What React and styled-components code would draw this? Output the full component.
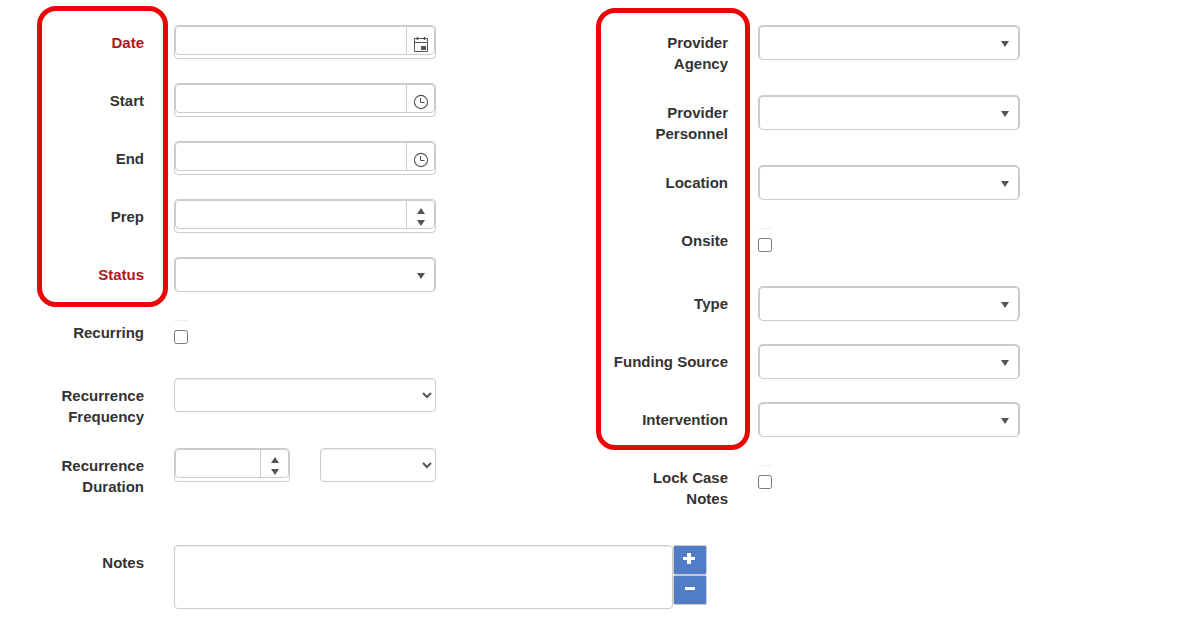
import React, { useState } from 'react';
import styled, { createGlobalStyle, css } from 'styled-components';

const CalendarIcon = () => (
  <svg width="16" height="16" viewBox="0 0 16 16" fill="none" stroke="#555" aria-hidden="true">
    <path d="M1.5 2.5h13v13h-13z M1 6.5h14" />
    <path d="M4.5 1v3 M11.5 1v3" />
    <path d="M3.5 2.5h2 M10.5 2.5h2" strokeWidth="2" />
    <rect x="8" y="10" width="5" height="4" fill="#555" stroke="none" />
  </svg>
);

const ClockIcon = () => (
  <svg width="16" height="16" viewBox="0 0 16 16" fill="none" stroke="#555" aria-hidden="true">
    <circle cx="8" cy="8" r="6.6" strokeWidth="1.1" />
    <path d="M7.5 4v4.5h4" />
  </svg>
);

const Triangle = ({ up }) => (
  <svg width="8" height="6" viewBox="0 0 8 6" fill="#555" aria-hidden="true">
    <path d={up ? 'M4 0L8 6H0z' : 'M0 0h8L4 6z'} />
  </svg>
);

const PickerField = ({ id, label, required, action, icon }) => (
  <Row>
    <Label htmlFor={id} $required={required}>{label}</Label>
    <Control>
      <Picker>
        <PickerInner>
          <PickerInput id={id} type="text" />
          <PickerButton type="button" aria-label={action}>{icon}</PickerButton>
        </PickerInner>
      </Picker>
    </Control>
  </Row>
);

const NumberBox = ({ id }) => {
  const [value, setValue] = useState('');
  const step = (n) => setValue(String((Number(value) || 0) + n));
  return (
    <Picker>
      <PickerInner>
        <PickerInput
          id={id}
          type="text"
          inputMode="numeric"
          value={value}
          onChange={(e) => setValue(e.target.value)}
        />
        <Spinner>
          <SpinButton type="button" aria-label="Increase value" onClick={() => step(1)}>
            <Triangle up />
          </SpinButton>
          <SpinButton type="button" aria-label="Decrease value" onClick={() => step(-1)}>
            <Triangle />
          </SpinButton>
        </Spinner>
      </PickerInner>
    </Picker>
  );
};

const DropDownField = ({ id, label, required }) => (
  <Row>
    <Label htmlFor={id} $required={required}>{label}</Label>
    <Control>
      <DropDown>
        <DropDownSelect id={id}>
          <option value=""></option>
        </DropDownSelect>
        <DropDownArrow><Triangle /></DropDownArrow>
      </DropDown>
    </Control>
  </Row>
);

const CheckField = ({ id, label }) => (
  <Row>
    <Label htmlFor={id}>{label}</Label>
    <Control>
      <CheckFrame>
        <CheckBox id={id} type="checkbox" />
      </CheckFrame>
    </Control>
  </Row>
);

export const CaseNoteForm = () => {
  const [rows, setRows] = useState(3);
  return (
    <Form>
      <Columns>
        <Column>
          <Group>
            <PickerField id="date" label="Date" required action="Open calendar" icon={<CalendarIcon />} />
            <PickerField id="start" label="Start" action="Pick start time" icon={<ClockIcon />} />
            <PickerField id="end" label="End" action="Pick end time" icon={<ClockIcon />} />
            <Row>
              <Label htmlFor="prep">Prep</Label>
              <Control><NumberBox id="prep" /></Control>
            </Row>
            <DropDownField id="status" label="Status" required />
            <LeftOutline />
          </Group>
          <CheckField id="recurring" label="Recurring" />
          <Row>
            <Label htmlFor="frequency">Recurrence Frequency</Label>
            <Control>
              <NativeSelect id="frequency">
                <option value=""></option>
              </NativeSelect>
            </Control>
          </Row>
          <Row>
            <Label htmlFor="duration">Recurrence Duration</Label>
            <Control>
              <Pair>
                <NumberBox id="duration" />
                <NativeSelect aria-label="Duration unit">
                  <option value=""></option>
                </NativeSelect>
              </Pair>
            </Control>
          </Row>
        </Column>

        <Column>
          <Group>
            <DropDownField id="agency" label="Provider Agency" />
            <DropDownField id="personnel" label="Provider Personnel" />
            <DropDownField id="location" label="Location" />
            <CheckField id="onsite" label="Onsite" />
            <DropDownField id="type" label="Type" />
            <DropDownField id="funding" label="Funding Source" />
            <DropDownField id="intervention" label="Intervention" />
            <RightOutline />
          </Group>
          <CheckField id="lock" label="Lock Case Notes" />
        </Column>
      </Columns>

      <NotesRow>
        <NotesLabel htmlFor="notes">Notes</NotesLabel>
        <NotesControl>
          <NotesArea id="notes" $rows={rows} />
          <SizeButtons>
            <SizeButton type="button" aria-label="Enlarge notes" onClick={() => setRows(rows + 1)}>
              <svg width="12" height="12" viewBox="0 0 12 12" fill="#fff" aria-hidden="true">
                <path d="M4 0h4v4h4v3H8v4H4V7H0V4h4z" />
              </svg>
            </SizeButton>
            <SizeButton type="button" aria-label="Shrink notes" onClick={() => setRows(Math.max(3, rows - 1))}>
              <svg width="12" height="12" viewBox="0 0 12 12" fill="#fff" aria-hidden="true">
                <rect x="2" y="4" width="10" height="3" />
              </svg>
            </SizeButton>
          </SizeButtons>
        </NotesControl>
      </NotesRow>
    </Form>
  );
};

const App = () => (
  <>
    <GlobalStyle />
    <CaseNoteForm />
  </>
);
export default App;

const GlobalStyle = createGlobalStyle`
  * {
    box-sizing: border-box;
  }
  body {
    margin: 0;
    background-color: #fff;
    color: #333;
    font-family: "Liberation Sans", Arial, sans-serif;
    font-size: 15px;
    line-height: 21px;
  }
  input, select, textarea, button {
    font: inherit;
    color: #555;
    margin: 0;
  }
`

const Form = styled.form`
  padding: 25px 11px 20px 13px;
`

const Columns = styled.div`
  display: grid;
  grid-template-columns: 1fr 1fr;
`

const Column = styled.div`
  min-width: 0;
`

const Group = styled.div`
  position: relative;
`

/* marks a set of labels, drawn over the rows */
const Outline = styled.div`
  position: absolute;
  border: 5px solid #ea0606;
  border-radius: 19px;
  pointer-events: none;
`

const LeftOutline = styled(Outline)`
  top: -19px;
  bottom: 8px;
  left: 24px;
  width: 131px;
`

const RightOutline = styled(Outline)`
  top: -17px;
  bottom: 10px;
  left: -1px;
  width: 154px;
`

const Row = styled.div`
  display: grid;
  grid-template-columns: 25% 50%;
  min-height: 58px;
  padding-bottom: 21px;
`

const Label = styled.label`
  padding: 7px 15px 0;
  text-align: right;
  font-weight: bold;
  color: ${({ $required }) => ($required ? '#b01818' : '#333')};
`

const Control = styled.div`
  min-width: 0;
  padding: 0 15px;
`

const box = css`
  border: 1px solid #ccc;
  border-radius: 4px;
  background-color: #fff;
`

const Picker = styled.div`
  ${box}
  min-width: 0;
  height: 34px;
`

const PickerInner = styled.div`
  ${box}
  display: flex;
  height: 29px;
  overflow: hidden;
`

const PickerInput = styled.input`
  flex: 1;
  min-width: 0;
  padding: 0 8px;
  border: 0;
  background: transparent;
  outline: none;
`

const PickerButton = styled.button`
  display: flex;
  align-items: flex-end;
  justify-content: center;
  width: 28px;
  padding: 0 0 2px;
  border: 0;
  border-left: 1px solid #ccc;
  background: transparent;
  cursor: pointer;
`

const Spinner = styled.div`
  display: flex;
  flex-direction: column;
  justify-content: flex-end;
  width: 28px;
  border-left: 1px solid #ccc;
`

const SpinButton = styled.button`
  display: flex;
  align-items: center;
  justify-content: center;
  height: 12px;
  padding: 2px 0 0;
  border: 0;
  background: transparent;
  cursor: pointer;
`

const DropDown = styled.div`
  ${box}
  display: grid;
  height: 35px;
  border-width: 2px 2px 1px;
  border-radius: 5px;
`

const DropDownSelect = styled.select`
  grid-area: 1 / 1;
  width: 100%;
  padding: 0 30px 0 8px;
  border: 0;
  appearance: none;
  background: transparent;
  outline: none;
`

const DropDownArrow = styled.span`
  grid-area: 1 / 1;
  display: flex;
  align-items: center;
  justify-self: end;
  padding: 2px 9px 0 0;
  pointer-events: none;
`

const NativeSelect = styled.select`
  ${box}
  display: block;
  width: 100%;
  height: 34px;
  padding: 6px 0;
  box-shadow: inset 0 1px 1px rgba(0, 0, 0, .08);
`

const Pair = styled.div`
  display: grid;
  grid-template-columns: 1fr 1fr;
  column-gap: 30px;
`

const CheckFrame = styled.div`
  display: flex;
  align-items: flex-start;
  width: 14px;
  height: 34px;
  margin: 5px 0 3px;
  padding-top: 9px;
  border-top: 1px solid #eee;
`

const CheckBox = styled.input`
  width: 14px;
  height: 14px;
`

const NotesRow = styled.div`
  display: flex;
  padding-top: 15px;
`

const NotesLabel = styled(Label)`
  flex: 0 0 12.5%;
`

const NotesControl = styled.div`
  display: flex;
  align-items: flex-start;
  flex: 0 1 563px;
  min-width: 0;
  padding: 0 15px;
`

const NotesArea = styled.textarea`
  ${box}
  flex: 1;
  min-width: 0;
  height: ${({ $rows }) => $rows * 21 + 1}px;
  padding: 6px 12px;
  resize: none;
  box-shadow: inset 0 1px 1px rgba(0, 0, 0, .08);
`

const SizeButtons = styled.div`
  display: flex;
  flex-direction: column;
`

const SizeButton = styled.button`
  display: flex;
  align-items: center;
  justify-content: center;
  width: 34px;
  height: 30px;
  padding: 0 2px 2px 0;
  border: 1px solid #ccc;
  border-radius: 2px;
  background-color: #517dc6;
  cursor: pointer;
`
